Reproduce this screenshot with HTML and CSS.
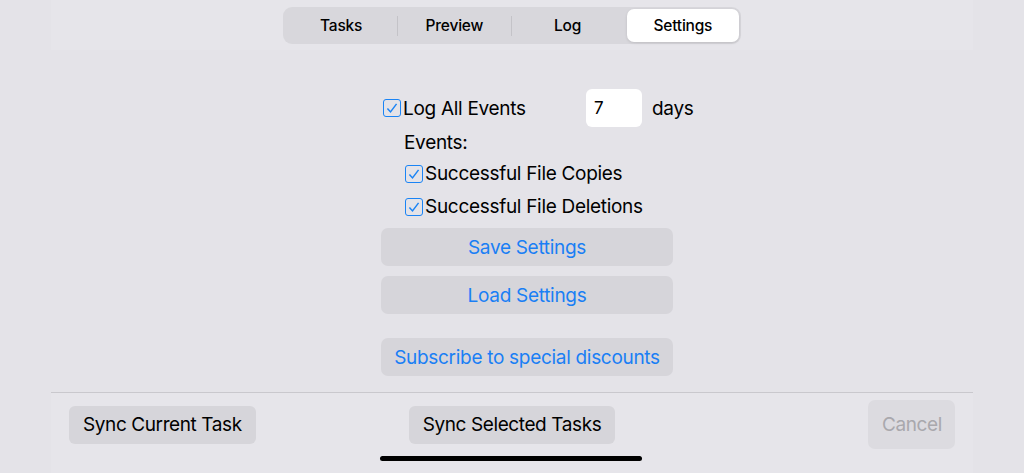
FILE: index.html
```html
<!doctype html>
<html lang="en">
<head>
    <meta charset="UTF-8">
    <meta name="viewport" content="width=device-width, initial-scale=1.0">
    <title>Sync Settings</title>
    <link rel="stylesheet" href="styles.css">
</head>
<body>
    <!-- Tab bar -->
    <div class="top-bar">
        <div class="segmented">
            <div class="segment">Tasks</div>
            <div class="sep"></div>
            <div class="segment">Preview</div>
            <div class="sep"></div>
            <div class="segment">Log</div>
            <div class="segment selected">Settings</div>
        </div>
    </div>

    <!-- Settings -->
    <div class="settings">
        <div class="row log-row">
            <span class="checkbox"><svg viewBox="0 0 14 14"><path d="M3 7.4 L5.7 10.4 L11 3.4" /></svg></span>
            <span class="label log-label">Log All Events</span>
            <input class="days-input" type="text" value="7">
            <span class="label">days</span>
        </div>
        <div class="row events-title"><span class="label">Events:</span></div>
        <div class="row sub-row">
            <span class="checkbox"><svg viewBox="0 0 14 14"><path d="M3 7.4 L5.7 10.4 L11 3.4" /></svg></span>
            <span class="label">Successful File Copies</span>
        </div>
        <div class="row sub-row">
            <span class="checkbox"><svg viewBox="0 0 14 14"><path d="M3 7.4 L5.7 10.4 L11 3.4" /></svg></span>
            <span class="label">Successful File Deletions</span>
        </div>
        <button class="wide-btn save-btn">Save Settings</button>
        <button class="wide-btn load-btn">Load Settings</button>
        <button class="wide-btn subscribe-btn">Subscribe to special discounts</button>
    </div>

    <!-- Bottom toolbar -->
    <div class="bottom-bar">
        <div class="toolbar">
            <button class="tool-btn left">Sync Current Task</button>
            <button class="tool-btn">Sync Selected Tasks</button>
            <button class="tool-btn cancel" disabled>Cancel</button>
        </div>
        <div class="home-indicator"></div>
    </div>
</body>
</html>
```

FILE: styles.css
```css
* {
    box-sizing: border-box;
}
body {
    margin: 0;
    height: 473px;
    overflow: hidden;
    background-color: #e4e3e8;
    font-family: Inter, "Noto Sans", sans-serif;
    color: #000;
    display: flex;
    flex-direction: column;
}
.top-bar {
    height: 50px;
    margin: 0 51px;
    background-color: #e6e5ea;
    display: flex;
    justify-content: center;
    padding-top: 7px;
}
.segmented {
    width: 458px;
    height: 37px;
    background-color: #d8d7dc;
    border-radius: 9px;
    padding: 2px;
    display: flex;
    align-items: center;
}
.segment {
    flex: 1;
    height: 33px;
    display: flex;
    justify-content: center;
    align-items: center;
    font-size: 15.5px;
    font-weight: 500;
    letter-spacing: -0.2px;
}
.segment.selected {
    background-color: #fff;
    border-radius: 7px;
    margin-left: 3px;
    box-shadow: 0 1px 3px rgba(0, 0, 0, 0.12);
}
.sep {
    width: 1px;
    height: 20px;
    background-color: #c4c3c8;
}
.settings {
    flex: 1;
    width: 292px;
    margin-left: 381px;
    padding-top: 39px;
    display: flex;
    flex-direction: column;
}
.row {
    display: flex;
    align-items: center;
}
.row > * {
    flex-shrink: 0;
}
.label {
    font-size: 19px;
    letter-spacing: -0.3px;
}
.log-row {
    height: 38px;
    padding-left: 2px;
    white-space: nowrap;
}
.log-label {
    width: 183px;
}
.checkbox {
    width: 18px;
    height: 18px;
    border: 1.8px solid #1a84f5;
    border-radius: 3px;
    margin-right: 2px;
    display: flex;
}
.checkbox svg {
    width: 100%;
    height: 100%;
    fill: none;
    stroke: #1a84f5;
    stroke-width: 1.3;
}
.days-input {
    width: 56px;
    height: 38px;
    border: none;
    border-radius: 6px;
    background-color: #fff;
    font-family: inherit;
    font-size: 17px;
    padding: 0 8px;
    margin-right: 10px;
    outline: none;
}
.events-title {
    height: 30px;
    padding-left: 23px;
}
.sub-row {
    height: 33px;
    padding-left: 24px;
    white-space: nowrap;
}
.wide-btn {
    width: 292px;
    height: 38px;
    border: none;
    border-radius: 7px;
    background-color: #d6d5da;
    color: #1a7ff5;
    font-family: inherit;
    font-size: 19px;
    letter-spacing: -0.3px;
    padding: 0;
}
.save-btn {
    margin-top: 5px;
}
.load-btn {
    margin-top: 10px;
}
.subscribe-btn {
    margin-top: 24px;
}
.bottom-bar {
    height: 81px;
    margin: 0 51px;
    background-color: #e6e5ea;
    border-top: 1px solid #c9c8cd;
    display: flex;
    flex-direction: column;
    align-items: center;
}
.toolbar {
    width: 100%;
    height: 63px;
    padding: 0 18px;
    display: grid;
    grid-template-columns: 1fr auto 1fr;
    align-items: center;
}
.tool-btn {
    height: 38px;
    border: none;
    border-radius: 6px;
    background-color: #d6d5da;
    font-family: inherit;
    font-size: 19px;
    letter-spacing: -0.4px;
    color: #000;
    padding: 0 14px;
}
.tool-btn.left {
    justify-self: start;
}
.tool-btn.cancel {
    justify-self: end;
    height: 49px;
    width: 87px;
    background-color: #dcdbe0;
    color: #a9a8ad;
    border-radius: 7px;
}
.home-indicator {
    width: 262px;
    height: 5px;
    border-radius: 3px;
    background-color: #000;
    margin-left: -2px;
}
```
